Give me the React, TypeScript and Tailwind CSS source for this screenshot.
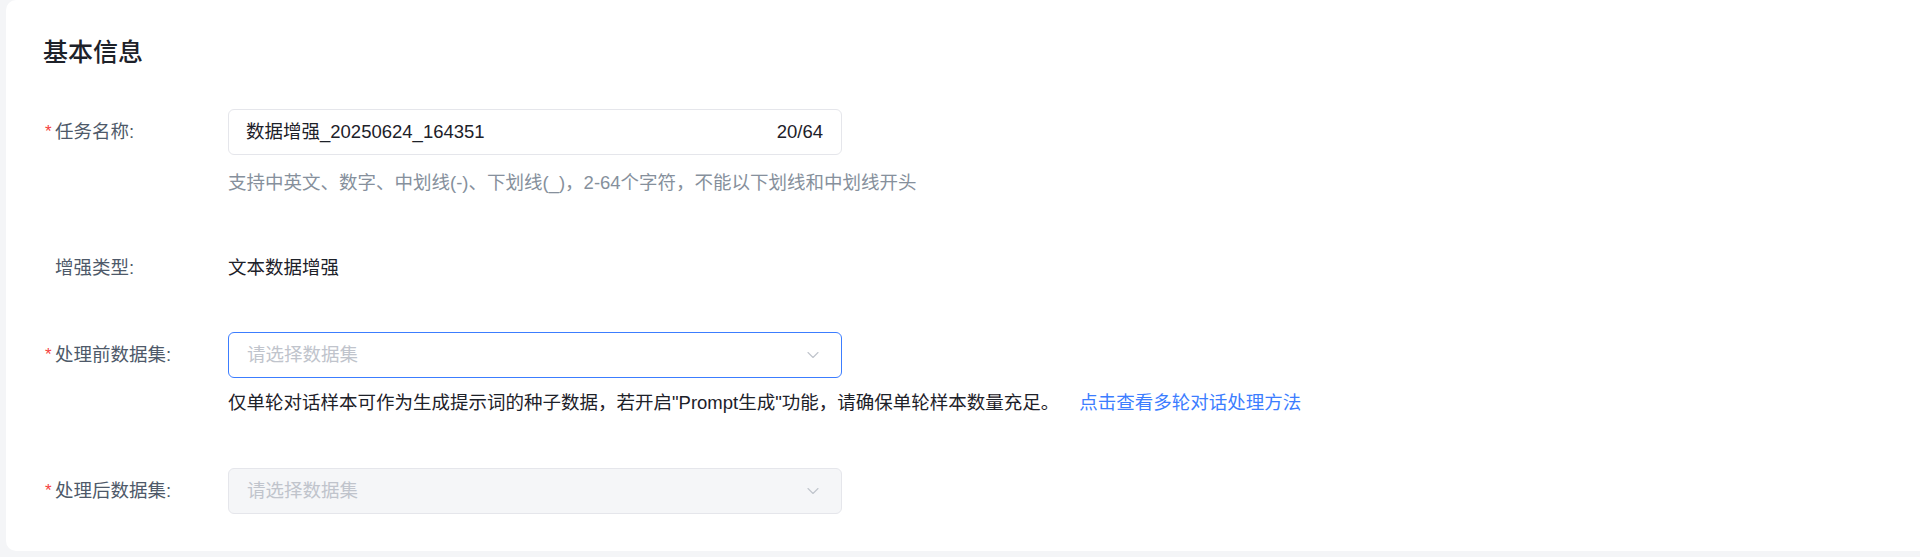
import { ChevronDown } from 'lucide-react'

const font = { fontFamily: '"Liberation Sans", "Noto Sans CJK SC", sans-serif' }

function Label({ text, required }: { text: string; required?: boolean }) {
  return (
    <div className="w-[185px] shrink-0 pl-[2px] flex items-center h-[46px] text-[18.5px] text-[#4e5969]">
      <span className="w-[10px] text-[#f53f3f] text-[17px] leading-none mt-[-2px]">{required ? '*' : ''}</span>
      <span>{text}</span>
    </div>
  )
}

function Select({ disabled }: { disabled?: boolean }) {
  return (
    <div
      className={
        disabled
          ? 'w-[614px] h-[46px] rounded-[6px] border border-[#e5e6eb] bg-[#f5f6f8] flex items-center justify-between pl-[18px] pr-[18px]'
          : 'w-[614px] h-[46px] rounded-[6px] border-[1.5px] border-[#3c7dff] bg-white flex items-center justify-between pl-[18px] pr-[18px]'
      }
    >
      <span className="text-[18.5px] text-[#c0c4cc]">请选择数据集</span>
      <ChevronDown size={20} strokeWidth={1.3} className="text-[#c0c4cc]" />
    </div>
  )
}

export default function App() {
  return (
    <div className="w-full h-[557px] bg-[#f4f5f7] overflow-hidden pl-[6px] pb-[6px] flex" style={font}>
      <div className="flex-1 mr-[-12px] bg-white rounded-[10px] pl-[37px] pt-[35px]">
        <h2 className="text-[25px] leading-[34px] font-medium text-[#1d2129]">基本信息</h2>

        {/* 任务名称 */}
        <div className="flex mt-[40px]">
          <Label text="任务名称:" required />
          <div>
            <div className="w-[614px] h-[46px] rounded-[6px] border border-[#e5e6eb] bg-white flex items-center justify-between pl-[17px] pr-[18px] text-[18.5px] text-[#1d2129]">
              <span>数据增强_20250624_164351</span>
              <span>20/64</span>
            </div>
            <div className="mt-[16px] leading-[24px] text-[18.5px] text-[#86909c]">
              支持中英文、数字、中划线(-)、下划线(_)，2-64个字符，不能以下划线和中划线开头
            </div>
          </div>
        </div>

        {/* 增强类型 */}
        <div className="flex mt-[50px]">
          <Label text="增强类型:" />
          <div className="h-[46px] flex items-center text-[18.5px] text-[#1d2129]">文本数据增强</div>
        </div>

        {/* 处理前数据集 */}
        <div className="flex mt-[41px]">
          <Label text="处理前数据集:" required />
          <div>
            <Select />
            <div className="mt-[13px] leading-[24px] text-[18.5px] text-[#1d2129] flex">
              <span>仅单轮对话样本可作为生成提示词的种子数据，若开启"Prompt生成"功能，请确保单轮样本数量充足。</span>
              <a className="ml-[20px] text-[#3c7dff] cursor-pointer">点击查看多轮对话处理方法</a>
            </div>
          </div>
        </div>

        {/* 处理后数据集 */}
        <div className="flex mt-[53px]">
          <Label text="处理后数据集:" required />
          <Select disabled />
        </div>
      </div>
    </div>
  )
}
